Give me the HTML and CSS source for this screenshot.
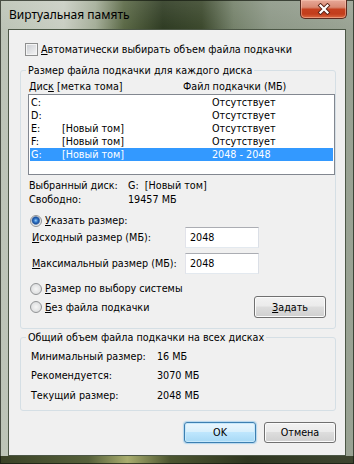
FILE: index.html
```html
<!DOCTYPE html>
<html lang="ru">
<head>
<meta charset="utf-8">
<title>Виртуальная память</title>
<link rel="stylesheet" href="styles.css">
</head>
<body>
<div class="window">
  <div class="titlebar">
    <span class="title">Виртуальная память</span>
    <span class="close" aria-label="Закрыть">
      <svg width="16" height="12" viewBox="0 0 16 12"><path d="M4.5 2.5 L11.5 9.5 M11.5 2.5 L4.5 9.5" stroke="#5a2418" stroke-width="4" stroke-linecap="square" fill="none"/><path d="M4.5 2.5 L11.5 9.5 M11.5 2.5 L4.5 9.5" stroke="#ffffff" stroke-width="2.2" stroke-linecap="square" fill="none"/></svg>
    </span>
  </div>
  <div class="client">
    <div class="auto"><span class="check"></span><span><u>А</u>втоматически выбирать объем файла подкачки</span></div>
    <fieldset class="group g1">
      <legend>Размер файла подкачки для каждого диска</legend>
      <div class="cols"><span>Дис<u>к</u> [метка тома]</span><span>Файл подкачки (МБ)</span></div>
      <div class="listbox">
        <div class="row"><span>C:</span><span></span><span>Отсутствует</span></div>
        <div class="row"><span>D:</span><span></span><span>Отсутствует</span></div>
        <div class="row"><span>E:</span><span>[Новый том]</span><span>Отсутствует</span></div>
        <div class="row"><span>F:</span><span>[Новый том]</span><span>Отсутствует</span></div>
        <div class="row sel"><span>G:</span><span>[Новый том]</span><span>2048 - 2048</span></div>
      </div>
      <div class="info">
        <span>Выбранный диск:</span><span>G:&nbsp;&nbsp;[Новый том]</span>
        <span>Свободно:</span><span>19457 МБ</span>
      </div>
      <div class="radio checked first"><span class="dot"></span><span><u>У</u>казать размер:</span></div>
      <div class="field f1"><span><u>И</u>сходный размер (МБ):</span><span class="edit">2048</span></div>
      <div class="field f2"><span><u>М</u>аксимальный размер (МБ):</span><span class="edit">2048</span></div>
      <div class="radio second"><span class="dot"></span><span><u>Р</u>азмер по выбору системы</span></div>
      <div class="lastrow">
        <div class="radio"><span class="dot"></span><span><u>Б</u>ез файла подкачки</span></div>
        <span class="btn set"><u>З</u>адать</span>
      </div>
    </fieldset>
    <fieldset class="group g2">
      <legend>Общий объем файла подкачки на всех дисках</legend>
      <div class="totals">
        <span>Минимальный размер:</span><span>16 МБ</span>
        <span>Рекомендуется:</span><span>3070 МБ</span>
        <span>Текущий размер:</span><span>2048 МБ</span>
      </div>
    </fieldset>
    <div class="actions">
      <span class="btn default">OK</span>
      <span class="btn">Отмена</span>
    </div>
  </div>
</div>
</body>
</html>
```
FILE: styles.css
```css
* { box-sizing: border-box; }
html, body { margin: 0; padding: 0; }
body {
  width: 354px;
  height: 464px;
  overflow: hidden;
  font-family: "DejaVu Sans Condensed", "DejaVu Sans", sans-serif;
  font-size: 10.7px;
  color: #000;
  background: #6d7a5e;
}
u { text-decoration: underline; text-underline-offset: 1px; }

.window {
  width: 354px;
  height: 464px;
  display: flex;
  flex-direction: column;
  padding: 0 8px 8px 8px;
  background:
    linear-gradient(90deg, #3a4226 0%, #56603a 25%, #a9ad6e 36%, #4c5530 48%, #2f3620 70%, #3e4530 100%) bottom / 100% 8px no-repeat,
    linear-gradient(180deg, rgba(255,255,255,0.10) 0, rgba(255,255,255,0) 30px),
    linear-gradient(90deg, #bcc4b6 0%, #c9cec3 18%, #a4ad98 27%, #5a6845 35%, #2e3b22 46%, #3b482c 57%, #74816a 66%, #8d9887 76%, #9aa394 100%);
  box-shadow: inset 0 0 0 1px rgba(20, 25, 15, 0.7);
}

.titlebar {
  height: 29px;
  display: flex;
  justify-content: space-between;
  align-items: flex-start;
}
.title {
  margin-left: 1px;
  padding-top: 7px;
  font-family: "Noto Sans", "Open Sans", sans-serif;
  font-size: 12px;
  line-height: 16px;
  color: #000;
}
.close {
  width: 47px;
  height: 19px;
  margin-right: -1px;
  display: flex;
  align-items: center;
  justify-content: center;
  border: 1px solid #5b2a20;
  border-top: none;
  border-radius: 0 0 5px 5px;
  background: linear-gradient(180deg, #e7a898 0%, #d98a74 40%, #c5401f 52%, #c23d1c 78%, #dc6a42 100%);
  box-shadow: inset 0 0 0 1px rgba(255, 210, 190, 0.45);
}

.client {
  flex: 1;
  display: flex;
  flex-direction: column;
  background: #f0f0f0;
  border: 1px solid #4c5746;
}

.auto {
  display: flex;
  align-items: center;
  gap: 3px;
  height: 13px;
  line-height: 13px;
  margin: 13px 0 0 16px;
}
.check {
  width: 13px;
  height: 13px;
  border: 1px solid #8e8f8f;
  background: linear-gradient(135deg, #c9ccd1 0%, #e4e5e7 60%, #f5f5f5 100%);
  box-shadow: inset 0 0 0 1px #f4f4f4;
}

.group {
  margin: 8px 9px 0 11px;
  border: 1px solid #d5dfe5;
  border-radius: 3px;
  padding: 3px 0 10px 7px;
  min-width: 0;
}
.group legend {
  padding: 0 2px;
  margin-left: -2px;
  line-height: 13px;
}

.cols {
  display: grid;
  grid-template-columns: 154px 1fr;
  padding-left: 1px;
  line-height: 13px;
}

.listbox {
  margin-top: 1px;
  width: 307px;
  height: 81px;
  border: 1px solid #828790;
  background: #fff;
  padding: 1px;
}
.row {
  display: grid;
  grid-template-columns: 31px 150px 1fr;
  height: 13px;
  line-height: 13px;
  padding-left: 1px;
}
.row.sel { background: #3399ff; color: #fff; }

.info {
  display: grid;
  grid-template-columns: 99px 1fr;
  line-height: 14px;
  margin-top: 4px;
  padding-left: 1px;
}

.radio {
  display: flex;
  align-items: center;
  gap: 3px;
  height: 13px;
  line-height: 13px;
  margin-left: 2px;
}
.radio.first { margin-top: 7px; }
.radio.second { margin-top: 8px; }
.dot {
  width: 12px;
  height: 12px;
  border-radius: 50%;
  border: 1px solid #929496;
  background: radial-gradient(circle at 50% 50%, #f6f6f6 0, #e2e3e4 60%, #cfd1d3 100%);
}
.radio.checked .dot {
  background: radial-gradient(circle at 48% 45%, #9fd0f8 0, #3b82d0 1.6px, #1a4f9e 3.2px, #6f8fb8 4px, #e4e6e8 4.6px, #f2f2f2 100%);
}

.field {
  display: grid;
  grid-template-columns: 153px 74px;
  align-items: center;
  height: 21px;
  padding-left: 4px;
}
.field.f2 { margin-top: 5px; }
.edit {
  height: 21px;
  border: 1px solid;
  border-color: #abadb3 #dbdfe6 #e3e9ef #e2e3ea;
  background: #fff;
  padding: 2px 0 0 4px;
  line-height: 15px;
}

.lastrow {
  display: flex;
  justify-content: space-between;
  align-items: center;
  margin-top: 1px;
  height: 22px;
}

.btn {
  display: flex;
  align-items: center;
  justify-content: center;
  width: 72px;
  height: 21px;
  border: 1px solid #707070;
  border-radius: 3px;
  background: linear-gradient(180deg, #f2f2f2 0%, #ebebeb 45%, #dddddd 50%, #cfcfcf 100%);
  box-shadow: inset 0 0 0 1px #fbfbfb;
  line-height: 13px;
}
.btn.set { margin-right: 9px; height: 22px; }
.btn.default {
  border-color: #3c7fb1;
  background: linear-gradient(180deg, #eaf6fd 0%, #d9f0fc 45%, #bee6fd 50%, #a7d9f5 100%);
  box-shadow: inset 0 0 0 1px #c6e8fb, 0 0 1px 1px rgba(120, 190, 235, 0.5);
}

.g2 { margin-top: 2px; padding: 5px 0 8px 7px; }
.totals {
  display: grid;
  grid-template-columns: 126px 1fr;
  row-gap: 6.5px;
  line-height: 13px;
  padding: 0.5px 0 0.5px 3px;
}

.actions {
  display: flex;
  justify-content: flex-end;
  gap: 8px;
  margin: 11px 9px 0 0;
}
```
